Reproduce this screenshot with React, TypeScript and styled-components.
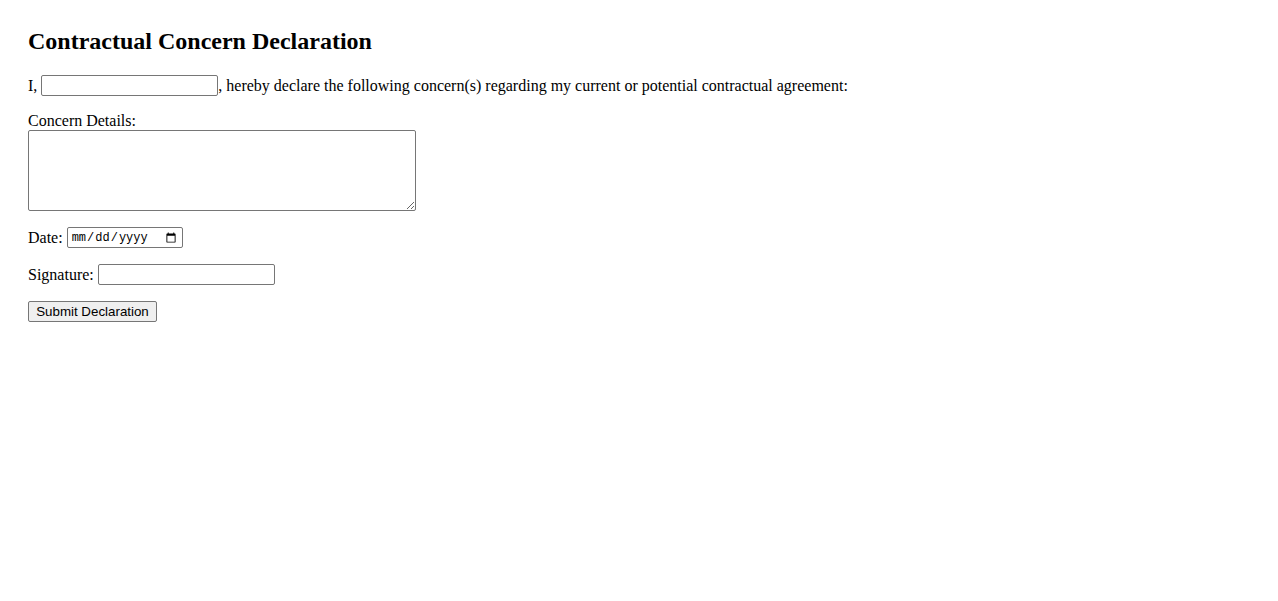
import React from "react";
import styled, { createGlobalStyle } from "styled-components";

const GlobalStyle = createGlobalStyle`
  body {
    margin: 0;
    background: #ffffff;
    color: #000000;
    font-family: "Liberation Serif", "Times New Roman", serif;
    font-size: 16px;
  }
`;

const Page = styled.form`
  padding: 27px 28px;
`;

const Title = styled.h2`
  margin: 0 0 20px 0;
  font-size: 24px;
  font-weight: bold;
  line-height: 28px;
`;

const Row = styled.div<{ $gap?: number }>`
  display: flex;
  align-items: center;
  height: 21px;
  margin-bottom: ${(p) => (p.$gap ?? 16)}px;
  white-space: pre;
`;

const Label = styled.label`
  display: block;
  line-height: 18px;
`;

const TextInput = styled.input<{ $width?: number }>`
  box-sizing: border-box;
  width: ${(p) => p.$width ?? 177}px;
  height: 21px;
  margin: 0;
  padding: 1px 2px;
  border: 1px solid #767676;
  border-radius: 2px;
  background: #ffffff;
  font-family: "Liberation Sans", Arial, sans-serif;
  font-size: 13px;
`;

const DateInput = styled(TextInput)`
  font-family: "Liberation Mono", "Courier New", monospace;
  font-size: 12px;
  padding: 0 3px;
`;

const Details = styled.textarea`
  display: block;
  box-sizing: border-box;
  width: 388px;
  height: 81px;
  margin: 0 0 16px 0;
  border: 1px solid #767676;
  border-radius: 2px;
  font-family: "Liberation Mono", monospace;
  font-size: 13px;
`;

const SubmitButton = styled.button`
  box-sizing: border-box;
  width: 129px;
  height: 21px;
  padding: 1px 6px;
  background: #efefef;
  border: 1px solid #767676;
  border-radius: 2px;
  color: #000000;
  font-family: "Liberation Sans", Arial, sans-serif;
  font-size: 13.33px;
`;

export default function App() {
  return (
    <>
      <GlobalStyle />
      <Page onSubmit={(e) => e.preventDefault()}>
        <Title>Contractual Concern Declaration</Title>
        <Row>
          I, <TextInput type="text" />, hereby declare the following concern(s) regarding my current or potential contractual agreement:
        </Row>
        <Label htmlFor="details">Concern Details:</Label>
        <Details id="details" />
        <Row>
          Date: <DateInput type="date" $width={116} />
        </Row>
        <Row>
          Signature: <TextInput type="text" />
        </Row>
        <SubmitButton type="submit">Submit Declaration</SubmitButton>
      </Page>
    </>
  );
}
